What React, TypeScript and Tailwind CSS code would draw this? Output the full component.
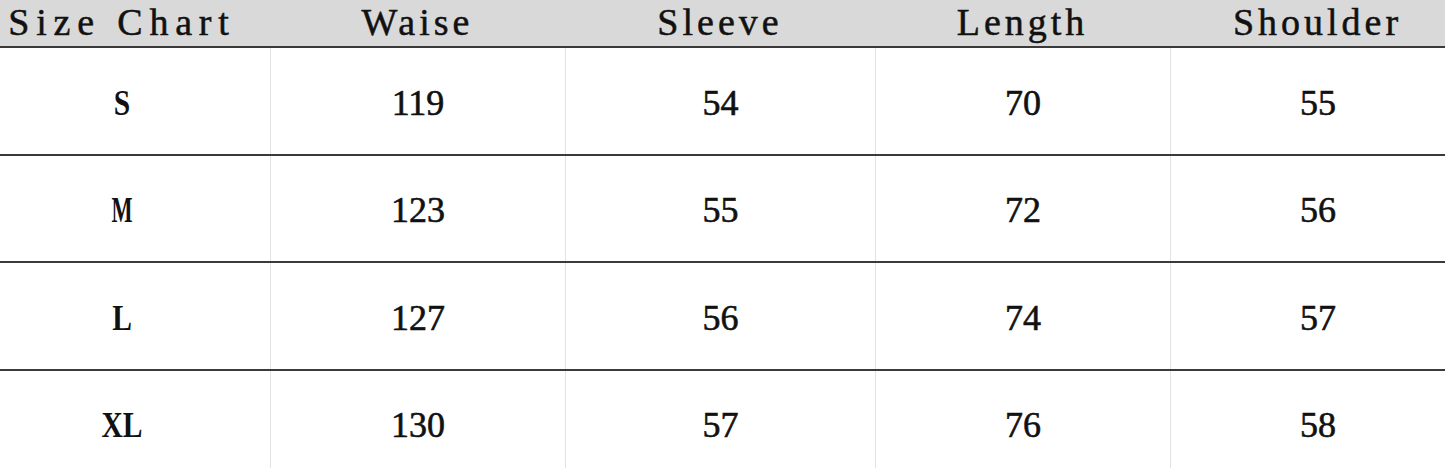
const headers = ["Size Chart", "Waise", "Sleeve", "Length", "Shoulder"];

const rows = [
  ["S", "119", "54", "70", "55"],
  ["M", "123", "55", "72", "56"],
  ["L", "127", "56", "74", "57"],
  ["XL", "130", "57", "76", "58"],
];

// the sheet is cropped on both sides, so columns overflow the window
const cols = "grid grid-cols-[296px_295px_310px_295px_295px] -ml-[26px]";

export default function App() {
  return (
    <div className="w-[1445px] h-[468px] overflow-hidden bg-white text-[#111] font-['Liberation_Serif',serif]">
      <div className={`${cols} h-[48px] bg-[#d9d9d9] border-b-2 border-[#3a3a3a]`}>
        {headers.map((h, i) => (
          <div
            key={h}
            className={`flex items-end justify-center pb-[5px] text-[38px] leading-none [-webkit-text-stroke:0.5px_#111] ${
              i === 0 ? "tracking-[6.8px]" : "tracking-[4px]"
            }`}
          >
            {h}
          </div>
        ))}
      </div>
      {rows.map((r, ri) => (
        <div
          key={ri}
          className={`${cols} h-[107.5px] border-b-2 border-[#3a3a3a]`}
        >
          {r.map((v, ci) => (
            <div
              key={ci}
              className={`flex items-center justify-center pt-[4px] text-[36px] leading-none ${
                ci > 0
                  ? "border-l border-[#e2e2e2] [-webkit-text-stroke:0.6px_#111]"
                  : "font-bold"
              }`}
            >
              <span className={ci === 0 ? (v === "M" ? "inline-block scale-x-[0.62]" : "inline-block scale-x-[0.82]") : ""}>
                {v}
              </span>
            </div>
          ))}
        </div>
      ))}
    </div>
  );
}
